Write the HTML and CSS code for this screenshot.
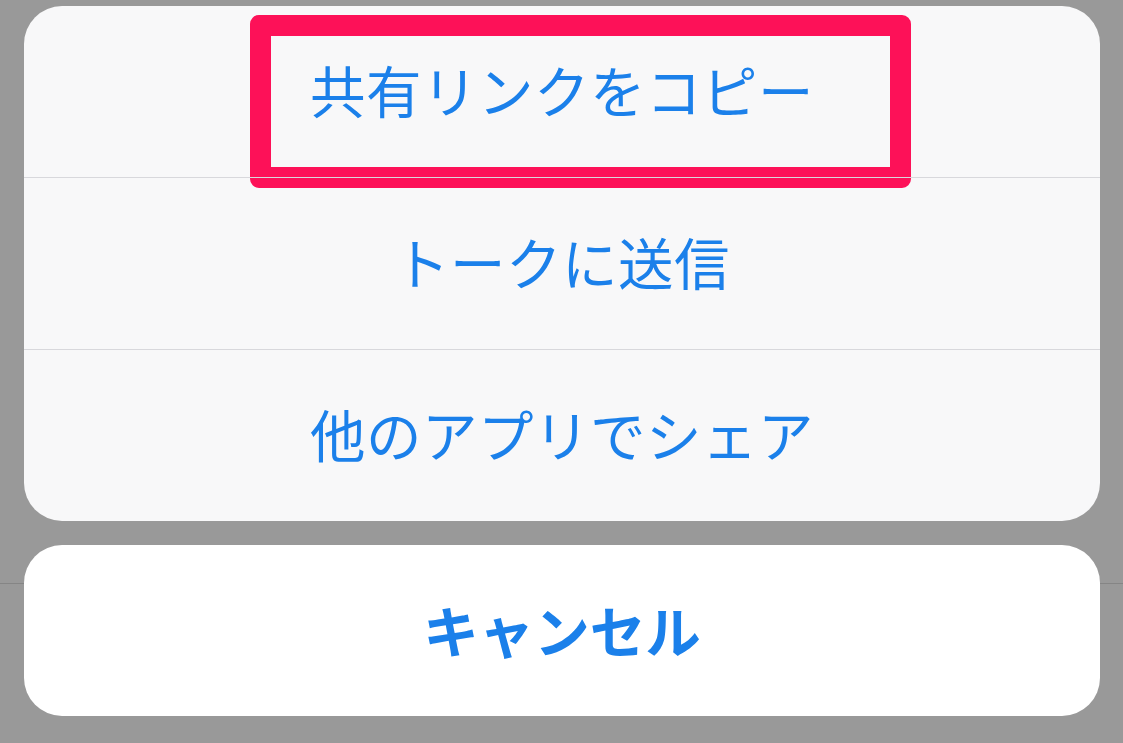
FILE: index.html
```html
<!DOCTYPE html>
<html lang="ja">
<head>
<meta charset="utf-8">
<title>共有</title>
<link rel="stylesheet" href="styles.css">
</head>
<body>
<div class="screen">
  <div class="sheet">
    <div class="row row-first">
      <span class="label">共有リンクをコピー</span>
      <div class="highlight"></div>
    </div>
    <div class="row"><span class="label">トークに送信</span></div>
    <div class="row"><span class="label">他のアプリでシェア</span></div>
  </div>
  <div class="cancel"><span class="label bold">キャンセル</span></div>
</div>
</body>
</html>
```

FILE: styles.css
```css
html, body {
  margin: 0;
  padding: 0;
}
body {
  width: 1123px;
  height: 743px;
  overflow: hidden;
  background: linear-gradient(to bottom, #999999 0, #999999 583px, #858585 583px, #858585 584px, #999999 584px);
  font-family: "Noto Sans CJK JP", "Noto Sans", sans-serif;
}
.screen {
  padding: 6px 23px 0 24px;
  display: flex;
  flex-direction: column;
  gap: 24px;
}
.sheet {
  position: relative;
  background: #f8f8f9;
  border-radius: 38px;
  display: flex;
  flex-direction: column;
}
.row {
  position: relative;
  height: 172px;
  box-sizing: border-box;
  padding-bottom: 4px;
  display: flex;
  align-items: center;
  justify-content: center;
  border-top: 1px solid #d8d8dc;
}
.row-first {
  height: 171px;
  border-top: none;
}
.label {
  font-size: 55.5px;
  line-height: 1;
  color: #1b80ea;
  letter-spacing: 0.5px;
}
.bold {
  font-weight: 700;
  letter-spacing: 0;
}
.highlight {
  position: absolute;
  left: 226px;
  top: 9px;
  width: 661px;
  height: 173px;
  box-sizing: border-box;
  border: 21px solid #fd1158;
  border-radius: 9px;
}
.cancel {
  height: 171px;
  box-sizing: border-box;
  padding-bottom: 2px;
  background: #ffffff;
  border-radius: 38px;
  display: flex;
  align-items: center;
  justify-content: center;
}
```
